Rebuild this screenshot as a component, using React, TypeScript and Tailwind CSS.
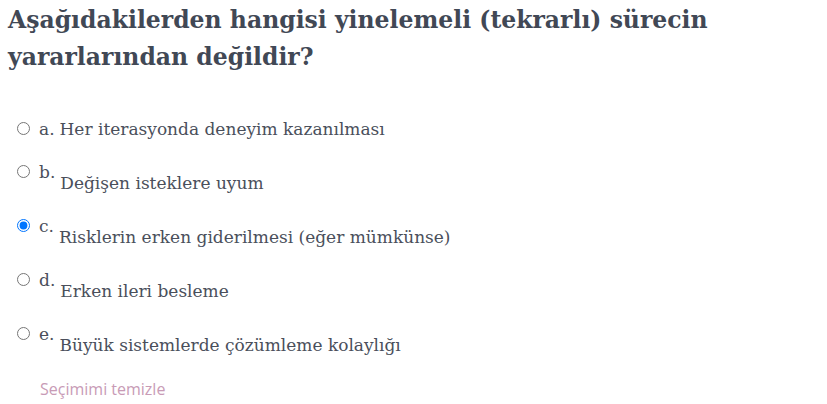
import { useState } from "react";

const options = [
  { key: "a", text: "Her iterasyonda deneyim kazanılması", inline: true },
  { key: "b", text: "Değişen isteklere uyum", inline: false },
  { key: "c", text: "Risklerin erken giderilmesi (eğer mümkünse)", inline: false },
  { key: "d", text: "Erken ileri besleme", inline: false },
  { key: "e", text: "Büyük sistemlerde çözümleme kolaylığı", inline: false },
];

export default function App() {
  const [selected, setSelected] = useState<string | null>("c");

  return (
    <main className="min-h-screen bg-white px-2 pt-[2px] font-['DejaVu_Serif',Georgia,serif] text-[#4a4f5b]">
      <h2 className="text-[23.5px] font-bold leading-[37px] text-[#414855]">
        Aşağıdakilerden hangisi yinelemeli (tekrarlı) sürecin
        <br />
        yararlarından değildir?
      </h2>

      <div className="mt-[40px] flex flex-col gap-[17px] pl-[9px]">
        {options.map((opt) => (
          <label key={opt.key} className="flex items-start">
            <input
              type="radio"
              name="answer"
              checked={selected === opt.key}
              onChange={() => setSelected(opt.key)}
              className="mt-[6px] h-[13px] w-[13px] shrink-0"
            />
            <span className="ml-[9px] text-[17px] leading-[26px]">
              {opt.key}.
            </span>
            <span
              className={
                opt.inline
                  ? "ml-[5px] text-[17px] leading-[26px]"
                  : "ml-[5px] mt-[11px] text-[17px] leading-[26px]"
              }
            >
              {opt.text}
            </span>
          </label>
        ))}
      </div>

      <button
        type="button"
        onClick={() => setSelected(null)}
        className="ml-[32px] mt-[19px] font-['Open_Sans',sans-serif] text-[16px] text-[#c89bb6]"
      >
        Seçimimi temizle
      </button>
    </main>
  );
}
